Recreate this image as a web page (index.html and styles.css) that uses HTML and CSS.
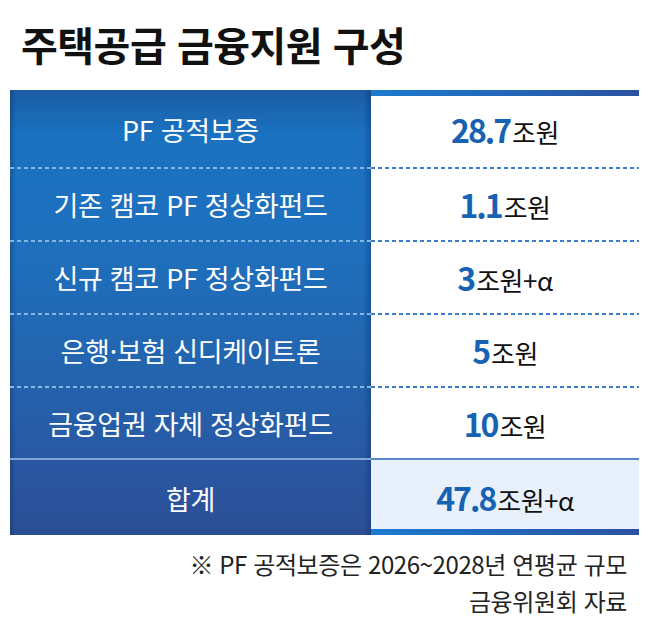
FILE: index.html
```html
<!DOCTYPE html>
<html lang="ko">
<head>
<meta charset="utf-8">
<link rel="stylesheet" href="styles.css">
</head>
<body>
<div class="page">
  <h1 class="title">주택공급 금융지원 구성</h1>
  <div class="table">
    <div class="lab r1">PF 공적보증</div>
    <div class="val r1 first"><b>28.7</b>조원</div>
    <div class="lab dash">기존 캠코 PF 정상화펀드</div>
    <div class="val dash"><b>1.1</b>조원</div>
    <div class="lab dash">신규 캠코 PF 정상화펀드</div>
    <div class="val dash"><b>3</b>조원+α</div>
    <div class="lab dash">은행·보험 신디케이트론</div>
    <div class="val dash"><b>5</b>조원</div>
    <div class="lab dash">금융업권 자체 정상화펀드</div>
    <div class="val dash"><b>10</b>조원</div>
    <div class="lab total">합계</div>
    <div class="val total"><b>47.8</b>조원+α</div>
  </div>
  <div class="note">
    <p>※ PF 공적보증은 2026~2028년 연평균 규모</p>
    <p>금융위원회 자료</p>
  </div>
</div>
</body>
</html>
```
FILE: styles.css
```css
html, body { margin: 0; padding: 0; background: #fff; }
body { font-family: "Noto Sans CJK KR", "Noto Sans", sans-serif; }
.page { width: 649px; height: 636px; padding: 0; box-sizing: border-box; }
.title {
  margin: 0;
  padding: 17px 0 0 21px;
  height: 90px;
  box-sizing: border-box;
  font-size: 40px;
  line-height: 54px;
  font-weight: 700;
  color: #111;
  letter-spacing: -0.5px;
}
.table {
  margin: 0 0 0 10px;
  width: 629px;
  display: grid;
  grid-template-columns: 361px 268px;
  grid-template-rows: 77px 73px 73px 73px 72px 77px;
  background:
    linear-gradient(90deg, rgba(10,40,90,0.35) 0, rgba(10,40,90,0) 6px, rgba(10,40,90,0) 353px, rgba(10,40,90,0.35) 361px) 0 0 / 361px 100% no-repeat,
    linear-gradient(180deg, #1c5ca5 0, #1b72c0 10%, #1e70bd 35%, #2463ad 65%, #2a57a2 85%, #2b4f96 100%) 0 0 / 361px 100% no-repeat;
}
.lab {
  display: flex;
  align-items: center;
  justify-content: center;
  color: #fff;
  font-size: 27px;
  letter-spacing: -0.3px;
  padding-top: 2px;
  box-sizing: border-box;
}
.val {
  display: flex;
  align-items: baseline;
  justify-content: center;
  color: #111;
  font-size: 26px;
  letter-spacing: -0.5px;
  padding-top: 14px;
  box-sizing: border-box;
}
.val b {
  color: #1762b2;
  font-size: 32px;
  font-weight: 700;
  letter-spacing: -2px;
  margin-right: 2px;
}
.first {
  border-top: 6px solid #1f74c2;
  border-image: linear-gradient(90deg, #1b7bcf, #2a52a0) 1;
  padding-top: 10px;
}
.lab.dash {
  background: repeating-linear-gradient(90deg, #86b6e4 0 4px, transparent 4px 7px) 0 0 / 100% 2px no-repeat;
}
.val.dash {
  background: repeating-linear-gradient(90deg, #3c7dcb 0 4px, transparent 4px 7px) 0 0 / 100% 2px no-repeat;
}
.lab.total {
  border-top: 2px solid #86a8d6;
}
.val.total {
  background: #e8f1fb;
  border-top: 2px solid #5a86c8;
  padding-top: 14px;
  position: relative;
}
.val.total::after {
  content: "";
  position: absolute;
  left: 0; right: 0; bottom: 0; height: 6px;
  background: linear-gradient(90deg, #1b7bcf, #2a52a0);
}
.note {
  padding: 10px 22px 0 0;
  text-align: right;
  font-size: 24px;
  line-height: 37px;
  color: #222;
  letter-spacing: -0.4px;
}
.note p { margin: 0; }
```
